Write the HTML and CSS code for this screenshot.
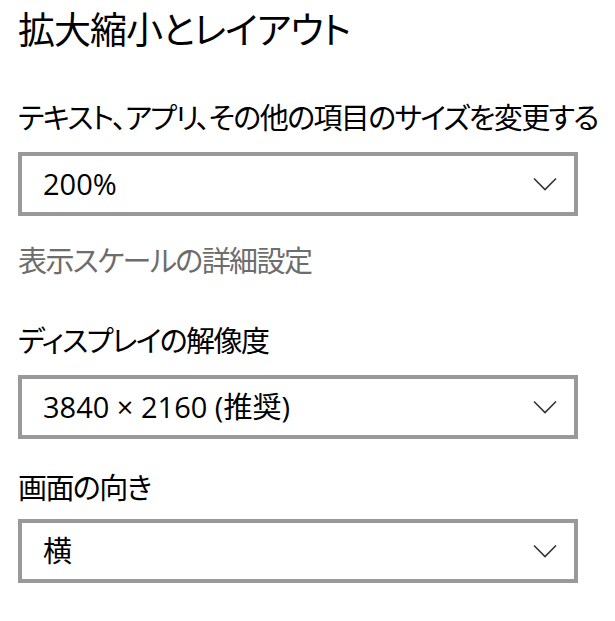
FILE: index.html
```html
<!DOCTYPE html>
<html lang="ja">
<head>
<meta charset="utf-8">
<title>拡大縮小とレイアウト</title>
<link rel="stylesheet" href="styles.css">
</head>
<body>
<main class="page">
  <h1 class="title">拡大縮小とレイアウト</h1>

  <section class="group group-first">
    <div class="label">テキスト、アプリ、その他の項目のサイズを変更する</div>
    <div class="combo">
      <span class="combo-value">200%</span>
      <svg class="chevron" width="24" height="14" viewBox="0 0 24 14"><polyline points="1,1.5 12,12.5 23,1.5" fill="none" stroke="#333" stroke-width="1.6"/></svg>
    </div>
  </section>

  <a class="link">表示スケールの詳細設定</a>

  <section class="group group-res">
    <div class="label">ディスプレイの解像度</div>
    <div class="combo">
      <span class="combo-value">3840 × 2160 (推奨)</span>
      <svg class="chevron" width="24" height="14" viewBox="0 0 24 14"><polyline points="1,1.5 12,12.5 23,1.5" fill="none" stroke="#333" stroke-width="1.6"/></svg>
    </div>
  </section>

  <section class="group group-orient">
    <div class="label">画面の向き</div>
    <div class="combo">
      <span class="combo-value combo-cjk">横</span>
      <svg class="chevron" width="24" height="14" viewBox="0 0 24 14"><polyline points="1,1.5 12,12.5 23,1.5" fill="none" stroke="#333" stroke-width="1.6"/></svg>
    </div>
  </section>
</main>
</body>
</html>
```

FILE: styles.css
```css
html, body {
  margin: 0;
  padding: 0;
  background: #ffffff;
}

body {
  font-family: "Open Sans", "Noto Sans CJK JP", sans-serif;
  font-feature-settings: "palt";
  color: #000000;
}

.page {
  display: flex;
  flex-direction: column;
  align-items: flex-start;
  padding: 0 0 0 18px;
}

.title {
  margin: 0;
  font-size: 37px;
  font-weight: 400;
  line-height: 60px;
  letter-spacing: -1px;
  white-space: nowrap;
}

.group {
  display: flex;
  flex-direction: column;
  gap: 14px;
}

.group-first {
  margin-top: 38px;
}

.group-res {
  margin-top: 40px;
}

.group-orient {
  margin-top: 29px;
  gap: 11px;
}

.label {
  font-size: 29px;
  line-height: 40px;
  letter-spacing: -1.6px;
  white-space: nowrap;
}

.combo {
  box-sizing: border-box;
  width: 560px;
  height: 64px;
  border: 4px solid #999999;
  padding: 0 17px 0 21px;
  display: flex;
  align-items: center;
  justify-content: space-between;
}

.combo-value {
  font-size: 29px;
  line-height: 40px;
  white-space: nowrap;
}

.chevron {
  display: block;
}

.link {
  margin-top: 25px;
  font-size: 29px;
  line-height: 40px;
  letter-spacing: -1.6px;
  color: #6d6d6d;
  white-space: nowrap;
}
```
